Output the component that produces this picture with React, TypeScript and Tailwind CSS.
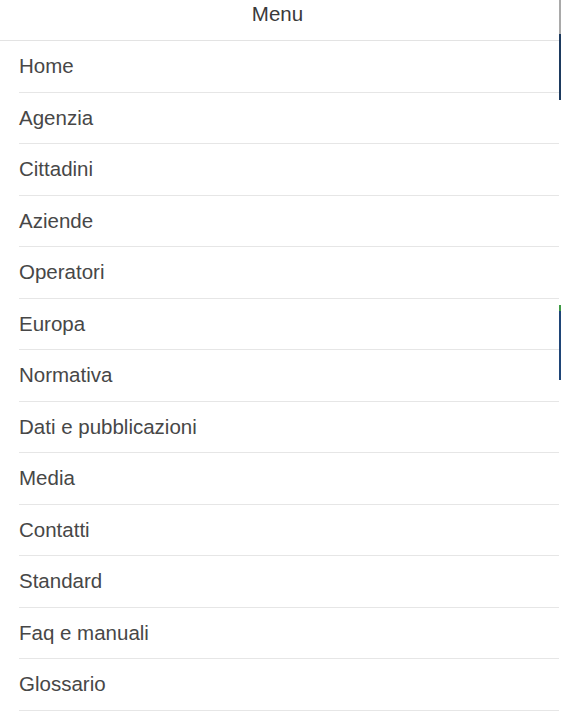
import { useState } from "react";

const links = [
  "Home",
  "Agenzia",
  "Cittadini",
  "Aziende",
  "Operatori",
  "Europa",
  "Normativa",
  "Dati e pubblicazioni",
  "Media",
  "Contatti",
  "Standard",
  "Faq e manuali",
  "Glossario",
];

export default function App() {
  const [active, setActive] = useState<string | null>(null);

  return (
    <div className="flex h-[720px] w-full overflow-hidden bg-white font-['Liberation_Sans',Arial,sans-serif]">
      {/* Slide-out menu */}
      <nav className="flex-1">
        <div className="flex h-[41px] items-center justify-center border-b border-[#e3e3e3] pb-[11px] pr-[4px] text-[20.5px] text-[#3a3a3a]">
          Menu
        </div>
        <ul>
          {links.map((label) => (
            <li
              key={label}
              onClick={() => setActive(label)}
              className={`ml-[19px] flex h-[51.5px] items-center border-b border-[#e6e6e6] pt-[1px] text-[20.5px] text-[#474747] ${
                active === label ? "bg-gray-50" : ""
              }`}
            >
              {label}
            </li>
          ))}
        </ul>
      </nav>

      {/* Edge of the page behind the menu */}
      <div className="flex w-[2px] flex-col">
        <div className="h-[34px] bg-[#a9a9a9]" />
        <div className="h-[66px] bg-[#1d3a5e]" />
        <div className="h-[205px] bg-white" />
        <div className="h-[6px] bg-[#3f9b45]" />
        <div className="h-[69px] bg-[#1f4577]" />
        <div className="flex-1 bg-white" />
      </div>
    </div>
  );
}
